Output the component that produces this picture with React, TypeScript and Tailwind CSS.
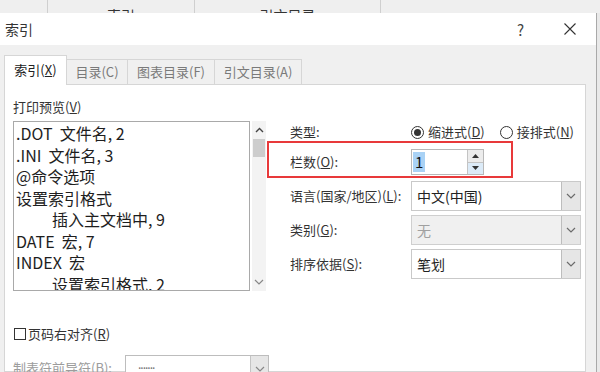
import React from 'react';

const font = "font-['Microsoft_YaHei','Noto_Sans_CJK_SC',sans-serif]";

function Chevron({ color = '#6b6b6b' }: { color?: string }) {
  return (
    <svg width="10" height="6" viewBox="0 0 10 6">
      <polyline points="1,1 5,5 9,1" fill="none" stroke={color} strokeWidth="1.2" />
    </svg>
  );
}

function Select({ value, disabled = false, className = '' }: { value: string; disabled?: boolean; className?: string }) {
  return (
    <div
      className={`flex h-[30px] border ${disabled ? 'bg-[#f0f0f0] border-[#cfcfcf]' : 'bg-white border-[#c9c9c9]'} ${className}`}
    >
      <div className={`flex-1 flex items-center pl-[5px] text-[14px] ${disabled ? 'text-[#a0a0a0]' : 'text-[#222]'}`}>
        {value}
      </div>
      <div className="w-[19px] flex items-center justify-center bg-[#e6e6e6] border-l border-[#bdbdbd]">
        <Chevron />
      </div>
    </div>
  );
}

function Radio({ checked, children }: { checked: boolean; children: React.ReactNode }) {
  return (
    <div className="flex items-center">
      <div className="w-[13px] h-[13px] rounded-full border border-[#333] bg-white flex items-center justify-center">
        {checked && <div className="w-[7px] h-[7px] rounded-full bg-[#333]" />}
      </div>
      <span className="ml-[4px] text-[13px] leading-[16px]">{children}</span>
    </div>
  );
}

const previewLines: { text: string; indent?: boolean }[] = [
  { text: '.DOT  文件名, 2' },
  { text: '.INI  文件名, 3' },
  { text: '@命令选项' },
  { text: '设置索引格式' },
  { text: '插入主文档中, 9', indent: true },
  { text: 'DATE  宏, 7' },
  { text: 'INDEX  宏' },
  { text: '设置索引格式, 2', indent: true },
];

export default function App() {
  return (
    <div className={`w-[600px] h-[372px] overflow-hidden bg-[#ececec] flex flex-col text-[#333] ${font}`}>
      {/* table behind the dialog */}
      <div className="h-[13px] flex bg-[#efefef] overflow-hidden text-[14px] leading-none">
        <div className="w-[48px] border-r border-[#cfcfcf]" />
        <div className="w-[147px] border-r border-[#cfcfcf] pt-[8px] text-center">索引</div>
        <div className="w-[186px] border-r border-[#cfcfcf] pt-[8px] text-center">引文目录</div>
        <div className="flex-1" />
      </div>

      <div className="flex flex-1 min-h-0">
        {/* dialog */}
        <div className="w-[597px] flex flex-col bg-[#f0f0f0] border-r border-[#a9a9a9]">
          {/* title bar */}
          <div className="h-[32px] bg-white flex items-center pl-[5px]">
            <span className="text-[14px] leading-none">索引</span>
            <span className="ml-auto text-[15px] leading-none text-[#444]">?</span>
            <svg className="ml-[40px] mr-[20px]" width="12" height="12" viewBox="0 0 12 12">
              <path d="M0.5 0.5 L11.5 11.5 M11.5 0.5 L0.5 11.5" stroke="#333" strokeWidth="1.1" />
            </svg>
          </div>

          {/* body */}
          <div className="flex-1 flex flex-col pl-[4px] pr-[10px] pt-[10px] min-h-0">
            {/* tabs */}
            <div className="flex items-end h-[30px] -mb-px relative z-10 text-[13px]">
              <div className="w-[63px] h-[30px] bg-white border-l border-t border-r border-[#d6d6d6] flex items-center justify-center pb-[2px] text-[#222]">
                索引(<span className="underline">X</span>)
              </div>
              <div className="w-[61px] h-[26px] border-t border-r border-b border-[#d6d6d6] flex items-center justify-center text-[#7a7a7a]">
                目录(C)
              </div>
              <div className="w-[87px] h-[26px] border-t border-r border-b border-[#d6d6d6] flex items-center justify-center text-[#7a7a7a]">
                图表目录(F)
              </div>
              <div className="w-[87px] h-[26px] border-t border-r border-b border-[#d6d6d6] flex items-center justify-center text-[#7a7a7a]">
                引文目录(A)
              </div>
            </div>

            {/* panel */}
            <div className="flex-1 flex bg-white border border-[#d6d6d6] min-h-0">
              {/* left column */}
              <div className="w-[285px] pl-[8px] pt-[14px] flex flex-col">
                <div className="text-[13px] leading-[16px]">
                  打印预览(<span className="underline">V</span>)
                </div>
                <div className="mt-[6px] flex">
                  <div className="w-[237px] h-[170px] border border-[#a9a9a9] pl-[2px] pt-[1px] overflow-hidden text-[16px] leading-[21.5px] text-[#1e1e1e] whitespace-pre">
                    {previewLines.map((l, i) => (
                      <div key={i} className={l.indent ? 'pl-[36px]' : ''}>
                        {l.text}
                      </div>
                    ))}
                  </div>
                  <div className="ml-[2px] w-[14px] h-[170px] flex flex-col bg-[#f3f3f3]">
                    <div className="h-[18px] flex items-center justify-center">
                      <svg width="9" height="6" viewBox="0 0 9 6">
                        <polyline points="1,5 4.5,1.5 8,5" fill="none" stroke="#444" strokeWidth="1.4" />
                      </svg>
                    </div>
                    <div className="h-[18px] bg-[#cdcdcd] mx-px" />
                    <div className="flex-1" />
                    <div className="h-[18px] flex items-center justify-center">
                      <Chevron color="#888" />
                    </div>
                  </div>
                </div>

                <div className="mt-[36px] h-[14px] flex items-center text-[13px]">
                  <div className="ml-px w-[12px] h-[12px] border border-[#333] bg-white" />
                  <span className="ml-[2px] leading-[14px]">
                    页码右对齐(<span className="underline">R</span>)
                  </span>
                </div>

                <div className="mt-[14px] flex items-start">
                  <div className="w-[112px] pt-[5px] text-[13px] leading-[16px] text-[#9c9c9c]">制表符前导符(B):</div>
                  <div className="w-[144px] h-[28px] flex border border-[#bdbdbd] bg-white">
                    <div className="flex-1 pl-[12px] pt-[2px] text-[12px] leading-[12px] text-[#777] tracking-[-1px]">.......</div>
                    <div className="w-[18px] flex items-center justify-center bg-[#e6e6e6] border-l border-[#c4c4c4]">
                      <Chevron color="#888" />
                    </div>
                  </div>
                </div>
              </div>

              {/* right column */}
              <div className="flex-1 pt-[37px] flex flex-col text-[13px]">
                <div className="h-[20px] flex items-center">
                  <div className="w-[121px]">类型:</div>
                  <Radio checked>
                    缩进式(<span className="underline">D</span>)
                  </Radio>
                  <div className="ml-[15px]">
                    <Radio checked={false}>
                      接排式(<span className="underline">N</span>)
                    </Radio>
                  </div>
                </div>

                <div className="mt-[7px] h-[26px] flex items-center relative">
                  <div className="w-[121px]">
                    栏数(<span className="underline">O</span>):
                  </div>
                  <div className="w-[73px] h-[26px] flex border border-[#b8b8b8] bg-white">
                    <div className="flex-1 flex items-center pl-[1px]">
                      <span className="bg-[#a9d2f5] text-[#111] text-[15px] leading-[20px] px-[2px]">1</span>
                    </div>
                    <div className="w-[16px] flex flex-col border-l border-[#c4c4c4] bg-[#ececec]">
                      <div className="flex-1 flex items-center justify-center border-b border-[#c4c4c4]">
                        <svg width="7" height="4" viewBox="0 0 7 4">
                          <polygon points="0,4 3.5,0 7,4" fill="#333" />
                        </svg>
                      </div>
                      <div className="flex-1 flex items-center justify-center bg-[#dcebf8]">
                        <svg width="7" height="4" viewBox="0 0 7 4">
                          <polygon points="0,0 3.5,4 7,0" fill="#333" />
                        </svg>
                      </div>
                    </div>
                  </div>
                  {/* red annotation frame */}
                  <div className="absolute left-[-23px] top-[-8px] w-[246px] h-[37px] border-2 border-[#e8393a] pointer-events-none" />
                </div>

                <div className="mt-[6px] h-[30px] flex items-center">
                  <div className="w-[121px]">
                    语言(国家/地区)(<span className="underline">L</span>):
                  </div>
                  <Select value="中文(中国)" className="w-[170px]" />
                </div>
                <div className="mt-[4px] h-[30px] flex items-center">
                  <div className="w-[121px]">
                    类别(<span className="underline">G</span>):
                  </div>
                  <Select value="无" disabled className="w-[170px]" />
                </div>
                <div className="mt-[4px] h-[30px] flex items-center">
                  <div className="w-[121px]">
                    排序依据(<span className="underline">S</span>):
                  </div>
                  <Select value="笔划" className="w-[170px]" />
                </div>
              </div>
            </div>
          </div>
        </div>
        <div className="flex-1 bg-[#e9e9e9]" />
      </div>
    </div>
  );
}
